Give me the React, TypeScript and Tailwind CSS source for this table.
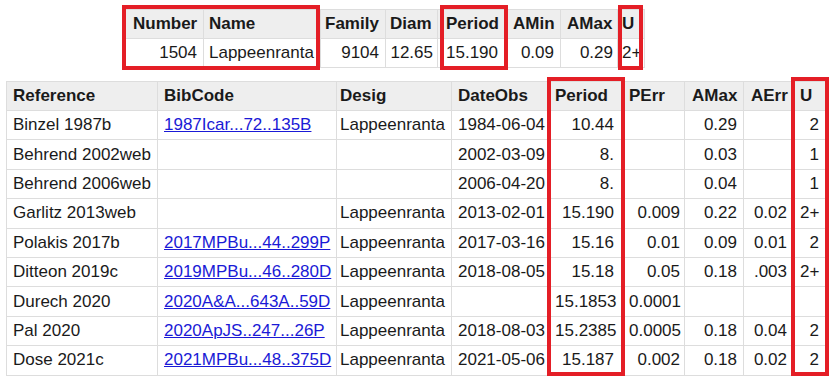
import React from 'react'

type Col = { label: string; w: string; pad: string; right?: boolean }

const TOP_COLS: Col[] = [
  { label: 'Number', w: 'w-[80px]', pad: 'pl-[9px] pr-[6px]', right: true },
  { label: 'Name', w: 'w-[117px]', pad: 'pl-[5px] pr-[2px]' },
  { label: 'Family', w: 'w-[65px]', pad: 'pl-[4px] pr-[6px]', right: true },
  { label: 'Diam', w: 'w-[52px]', pad: 'pl-[4px] pr-[4px]', right: true },
  { label: 'Period', w: 'w-[70px]', pad: 'pl-[8px] pr-[2px]' },
  { label: 'AMin', w: 'w-[53px]', pad: 'pl-[5px] pr-[6px]', right: true },
  { label: 'AMax', w: 'w-[57px]', pad: 'pl-[6px] pr-[4px]', right: true },
  { label: 'U', w: 'w-[27px]', pad: 'pl-[4px] pr-[2px]' },
]

const TOP_ROW = ['1504', 'Lappeenranta', '9104', '12.65', '15.190', '0.09', '0.29', '2+']

const COLS: Col[] = [
  { label: 'Reference', w: 'w-[151px]', pad: 'pl-[6px] pr-[4px]' },
  { label: 'BibCode', w: 'w-[179px]', pad: 'pl-[6px] pr-[2px]' },
  { label: 'Desig', w: 'w-[115px]', pad: 'pl-[3px] pr-[2px]' },
  { label: 'DateObs', w: 'w-[98px]', pad: 'pl-[6px] pr-[2px]' },
  { label: 'Period', w: 'w-[73px]', pad: 'pl-[5px] pr-[8px]', right: true },
  { label: 'PErr', w: 'w-[62px]', pad: 'pl-[6px] pr-[4px]', right: true },
  { label: 'AMax', w: 'w-[59px]', pad: 'pl-[7px] pr-[6px]', right: true },
  { label: 'AErr', w: 'w-[50px]', pad: 'pl-[7px] pr-[6px]', right: true },
  { label: 'U', w: 'w-[32px]', pad: 'pl-[6px] pr-[6px]', right: true },
]

const ROWS: string[][] = [
  ['Binzel 1987b', '1987Icar...72..135B', 'Lappeenranta', '1984-06-04', '10.44', '', '0.29', '', '2'],
  ['Behrend 2002web', '', '', '2002-03-09', '8.', '', '0.03', '', '1'],
  ['Behrend 2006web', '', '', '2006-04-20', '8.', '', '0.04', '', '1'],
  ['Garlitz 2013web', '', 'Lappeenranta', '2013-02-01', '15.190', '0.009', '0.22', '0.02', '2+'],
  ['Polakis 2017b', '2017MPBu...44..299P', 'Lappeenranta', '2017-03-16', '15.16', '0.01', '0.09', '0.01', '2'],
  ['Ditteon 2019c', '2019MPBu...46..280D', 'Lappeenranta', '2018-08-05', '15.18', '0.05', '0.18', '.003', '2+'],
  ['Durech 2020', '2020A&A...643A..59D', 'Lappeenranta', '', '15.1853', '0.0001', '', '', ''],
  ['Pal 2020', '2020ApJS..247...26P', 'Lappeenranta', '2018-08-03', '15.2385', '0.0005', '0.18', '0.04', '2'],
  ['Dose 2021c', '2021MPBu...48..375D', 'Lappeenranta', '2021-05-06', '15.187', '0.002', '0.18', '0.02', '2'],
]

const cell = 'border border-[#dddddd] leading-[20px] whitespace-nowrap overflow-visible'

function DataTable({
  cols,
  rows,
  width,
  rowH,
  link,
}: {
  cols: Col[]
  rows: string[][]
  width: string
  rowH: string
  link?: number
}) {
  return (
    <table className={`border-collapse table-fixed ${width}`}>
      <thead>
        <tr className="bg-[#eeeeee] h-[29px]">
          {cols.map((c) => (
            <th key={c.label} className={`${cell} ${c.w} ${c.pad} text-left font-bold`}>
              {c.label}
            </th>
          ))}
        </tr>
      </thead>
      <tbody>
        {rows.map((row, r) => (
          <tr key={r} className={rowH}>
            {row.map((v, i) => (
              <td
                key={i}
                className={`${cell} ${cols[i].pad} ${cols[i].right ? 'text-right' : 'text-left'}`}
              >
                {i === link && v ? <a className="text-[#1a1ad6] underline">{v}</a> : v}
              </td>
            ))}
          </tr>
        ))}
      </tbody>
    </table>
  )
}

// red annotation frames drawn over the tables
function Box({ className }: { className: string }) {
  return <div className={`pointer-events-none absolute border-4 border-[#e41e26] ${className}`} />
}

export default function App() {
  return (
    <div
      className="relative w-[836px] h-[383px] overflow-hidden bg-white pt-[9px] text-[17px] text-[#1a1a1a]"
      style={{ fontFamily: '"Liberation Sans", Arial, sans-serif' }}
    >
      <div className="flex flex-col gap-[13px]">
        <div className="pl-[123px]">
          <DataTable cols={TOP_COLS} rows={[TOP_ROW]} width="w-[521px]" rowH="h-[29px]" />
        </div>
        <div className="pl-[6px]">
          <DataTable cols={COLS} rows={ROWS} width="w-[819px]" rowH="h-[29.4px]" link={1} />
        </div>
      </div>

      <Box className="left-[122px] top-[5px] w-[198px] h-[65px]" />
      <Box className="left-[440px] top-[5px] w-[68px] h-[65px]" />
      <Box className="left-[618px] top-[5px] w-[25px] h-[65px]" />
      <Box className="left-[547px] top-[77px] w-[78px] h-[299px]" />
      <Box className="left-[791px] top-[77px] w-[38px] h-[299px]" />
    </div>
  )
}
